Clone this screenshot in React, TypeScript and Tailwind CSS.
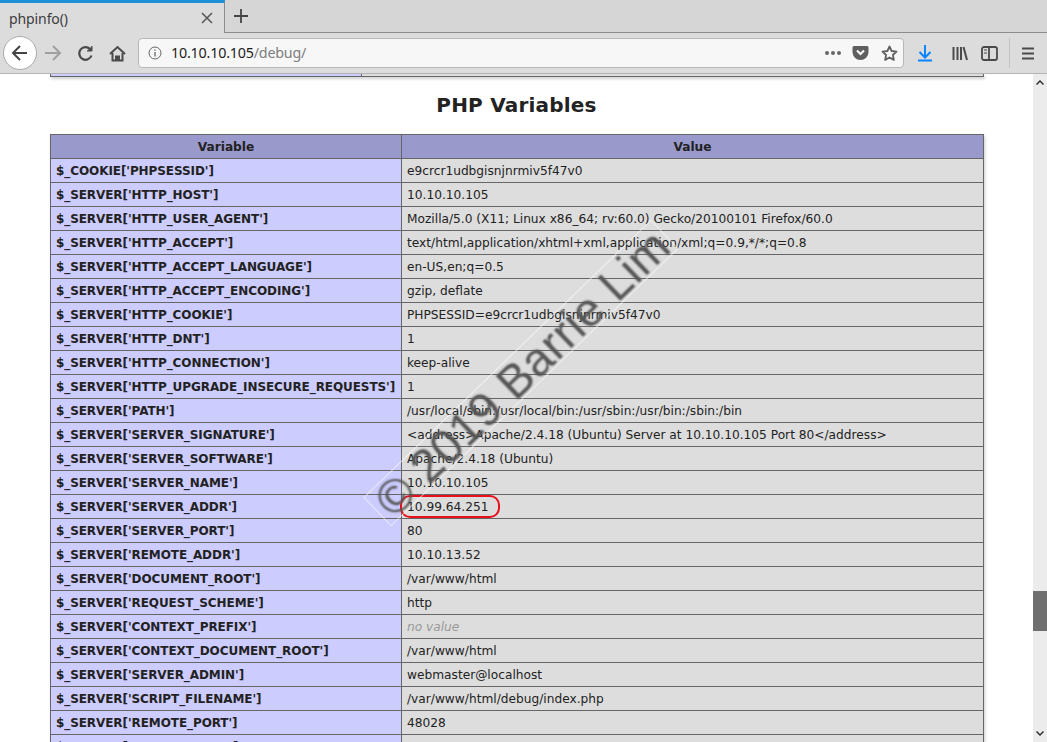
import React from "react";

const rows: [string, string, boolean?][] = [
  ["$_COOKIE['PHPSESSID']", "e9crcr1udbgisnjnrmiv5f47v0"],
  ["$_SERVER['HTTP_HOST']", "10.10.10.105"],
  ["$_SERVER['HTTP_USER_AGENT']", "Mozilla/5.0 (X11; Linux x86_64; rv:60.0) Gecko/20100101 Firefox/60.0"],
  ["$_SERVER['HTTP_ACCEPT']", "text/html,application/xhtml+xml,application/xml;q=0.9,*/*;q=0.8"],
  ["$_SERVER['HTTP_ACCEPT_LANGUAGE']", "en-US,en;q=0.5"],
  ["$_SERVER['HTTP_ACCEPT_ENCODING']", "gzip, deflate"],
  ["$_SERVER['HTTP_COOKIE']", "PHPSESSID=e9crcr1udbgisnjnrmiv5f47v0"],
  ["$_SERVER['HTTP_DNT']", "1"],
  ["$_SERVER['HTTP_CONNECTION']", "keep-alive"],
  ["$_SERVER['HTTP_UPGRADE_INSECURE_REQUESTS']", "1"],
  ["$_SERVER['PATH']", "/usr/local/sbin:/usr/local/bin:/usr/sbin:/usr/bin:/sbin:/bin"],
  ["$_SERVER['SERVER_SIGNATURE']", "<address>Apache/2.4.18 (Ubuntu) Server at 10.10.10.105 Port 80</address>"],
  ["$_SERVER['SERVER_SOFTWARE']", "Apache/2.4.18 (Ubuntu)"],
  ["$_SERVER['SERVER_NAME']", "10.10.10.105"],
  ["$_SERVER['SERVER_ADDR']", "10.99.64.251"],
  ["$_SERVER['SERVER_PORT']", "80"],
  ["$_SERVER['REMOTE_ADDR']", "10.10.13.52"],
  ["$_SERVER['DOCUMENT_ROOT']", "/var/www/html"],
  ["$_SERVER['REQUEST_SCHEME']", "http"],
  ["$_SERVER['CONTEXT_PREFIX']", "no value", true],
  ["$_SERVER['CONTEXT_DOCUMENT_ROOT']", "/var/www/html"],
  ["$_SERVER['SERVER_ADMIN']", "webmaster@localhost"],
  ["$_SERVER['SCRIPT_FILENAME']", "/var/www/html/debug/index.php"],
  ["$_SERVER['REMOTE_PORT']", "48028"],
  ["$_SERVER['REDIRECT_URL']", ""],
];

function Row({ k, v, muted }: { k: string; v: string; muted?: boolean }) {
  return (
    <div className="flex h-[24px] shrink-0 border-b border-[#666]">
      <div className="w-[351px] shrink-0 bg-[#ccf] border-r border-[#666] pl-[5px] font-bold text-[12px] tracking-[-0.08px] text-[#222] leading-[25px] whitespace-nowrap">{k}</div>
      <div className={`flex-1 bg-[#ddd] pl-[5px] text-[12.2px] leading-[25px] whitespace-nowrap ${muted ? "italic text-[#999]" : "text-[#222]"}`}>{v}</div>
    </div>
  );
}

export default function App() {
  return (
    <div className="relative w-[1047px] h-[742px] overflow-hidden bg-white flex flex-col font-['DejaVu_Sans',sans-serif]">
      {/* Tab strip */}
      <div className="h-[33px] shrink-0 bg-[#d6d6d6] flex">
        <div className="w-[225px] bg-[#dcdcdc] border-t-[3px] border-[#1e90d8] border-r border-r-[#8c8c8c] flex items-center pl-[9px] pr-[10px] justify-between text-[#3c3c3c]">
          <span className="font-['Noto_Sans',sans-serif] text-[14px] tracking-[-0.1px]">phpinfo()</span>
          <svg width="14" height="14" viewBox="0 0 14 14" stroke="#555" strokeWidth="1.5" fill="none"><path d="M2 2l10 10M12 2L2 12" /></svg>
        </div>
        <div className="flex-1 border-b border-[#8c8c8c] pl-[8px] pt-[8px]">
          <svg width="16" height="16" viewBox="0 0 16 16" stroke="#444" strokeWidth="1.8" fill="none"><path d="M8 1v14M1 8h14" /></svg>
        </div>
      </div>
      {/* Toolbar */}
      <div className="h-[41px] shrink-0 bg-[#dcdcdc] border-b border-[#b4b4b4] flex items-center relative z-10">
        <div className="ml-[3px] w-[34px] h-[34px] rounded-full bg-white border border-[#aaa] flex items-center justify-center">
          <svg width="18" height="18" viewBox="0 0 18 18" fill="none" stroke="#444" strokeWidth="2"><path d="M16 9H2M9 2L2 9l7 7" /></svg>
        </div>
        <svg className="ml-[7px]" width="18" height="18" viewBox="0 0 18 18" fill="none" stroke="#a0a0a0" strokeWidth="2"><path d="M1 9h15M9 2l7 7-7 7" /></svg>
        <svg className="ml-[15px]" width="17" height="17" viewBox="0 0 17 17" fill="none" stroke="#4a4a4a" strokeWidth="2.2"><path d="M14.5 10.5A6.3 6.3 0 1 1 13 4" /><path d="M15 1v5h-5" fill="#4a4a4a" strokeWidth="1" /></svg>
        <svg className="ml-[15px]" width="17" height="17" viewBox="0 0 17 17" fill="none" stroke="#4a4a4a" strokeWidth="2"><path d="M1 9l7.5-7L16 9" /><path d="M3.5 8v7.5h10V8" /><path d="M7 15.5v-4h3v4" fill="#4a4a4a" /></svg>
        <div className="ml-[12px] w-[766px] h-[30px] rounded-[4px] bg-[#f7f7f7] border border-[#b8b8b8] flex items-center pl-[9px] pr-[5px]">
          <svg width="14" height="14" viewBox="0 0 14 14" fill="none" stroke="#666" strokeWidth="1"><circle cx="7" cy="7" r="6" /><path d="M7 6v4.5M7 3.5v1.2" strokeWidth="1.3" /></svg>
          <span className="ml-[9px] text-[14.3px] text-[#1c1c1c] font-['Noto_Sans',sans-serif] tracking-[-0.2px]">10.10.10.105<span className="text-[#7d7d7d]">/debug/</span></span>
          <div className="ml-auto flex items-center">
            <span className="flex gap-[2px]">
              <span className="w-[4px] h-[4px] rounded-full bg-[#666]" /><span className="w-[4px] h-[4px] rounded-full bg-[#666]" /><span className="w-[4px] h-[4px] rounded-full bg-[#666]" />
            </span>
            <svg className="ml-[11px]" width="17" height="16" viewBox="0 0 17 16"><path d="M2 1h13a1.5 1.5 0 0 1 1.5 1.5V7a8 8 0 0 1-16 0V2.500A1.500 1.500 0 0 1 2 1z" fill="#5f5f5f" /><path d="M5 5.500l3.500 3.500L12 5.500" stroke="#f7f7f7" strokeWidth="2.200" fill="none" /></svg>
            <svg className="ml-[12px]" width="17" height="17" viewBox="0 0 17 17" fill="none" stroke="#5f5f5f" strokeWidth="1.800" strokeLinejoin="round"><path d="M8.500 1.500l2.100 4.500 4.900.600-3.600 3.400.950 4.900-4.350-2.400-4.350 2.400.950-4.900L1.500 6.600l4.900-.600z" /></svg>
          </div>
        </div>
        <svg className="ml-[13px]" width="16" height="18" viewBox="0 0 16 18" fill="none" stroke="#0a84ff" strokeWidth="2"><path d="M8 1v12M2.500 8L8 13.500 13.500 8M1 16.500h14" /></svg>
        <svg className="ml-[19px]" width="16" height="15" viewBox="0 0 16 15" fill="none" stroke="#4a4a4a" strokeWidth="2"><path d="M1.500 1v13M5.500 1v13M9 1v13M11.500 1l3.500 13" /></svg>
        <svg className="ml-[13px]" width="17" height="15" viewBox="0 0 17 15" fill="none" stroke="#4a4a4a" strokeWidth="1.800"><rect x="1" y="1" width="15" height="13" rx="2" /><path d="M8 1v13" /><path d="M3 4h3M3 7h3" strokeWidth="1" /></svg>
        <div className="ml-[11px] w-px h-[30px] bg-[#c4c4c4]" />
        <svg className="ml-[11px]" width="14" height="13" viewBox="0 0 14 13" fill="none" stroke="#4a4a4a" strokeWidth="1.800"><path d="M1 1.500h12M1 6.500h12M1 11.500h12" /></svg>
      </div>
      {/* Page */}
      <div className="flex-1 flex min-h-0">
        <div className="flex-1 min-w-0 overflow-hidden">
          <div className="w-[934px] ml-[50px] h-[3px] border-x border-b border-[#666] flex shadow-[1px_2px_3px_#ccc]">
            <div className="w-[311px] shrink-0 bg-[#ccf] border-r border-[#666]" />
            <div className="flex-1 bg-[#ddd]" />
          </div>
          <h2 className="h-[57px] pb-[2px] flex items-center justify-center text-[20px] tracking-[0.2px] font-bold text-[#222] ml-[33px] w-[967px]">PHP Variables</h2>
          <div className="w-[934px] ml-[50px] border-x border-t border-[#666] flex flex-col shadow-[1px_2px_3px_#ccc]">
            <div className="flex h-[24px] shrink-0 border-b border-[#666] bg-[#99c] font-bold text-[12.2px] text-[#222] text-center leading-[25px]">
              <div className="w-[351px] shrink-0 border-r border-[#666]">Variable</div>
              <div className="flex-1">Value</div>
            </div>
            {rows.map(([k, v, m]) => <Row key={k} k={k} v={v} muted={m} />)}
          </div>
        </div>
        {/* Scrollbar */}
        <div className="w-[14px] shrink-0 bg-[#ececec] flex flex-col items-center pt-[6px] pb-[6px]">
          <svg width="8" height="5" viewBox="0 0 8 5" fill="none" stroke="#333" strokeWidth="1.500"><path d="M.5 4.500L4 1l3.500 3.500" /></svg>
          <div className="w-full h-[40px] bg-[#6f6f6f] mt-[506px]" />
          <svg className="mt-auto" width="8" height="5" viewBox="0 0 8 5" fill="none" stroke="#333" strokeWidth="1.500"><path d="M.5.5L4 4l3.500-3.500" /></svg>
        </div>
      </div>
      {/* Red annotation over the SERVER_ADDR value */}
      <div className="absolute left-[400px] top-[495px] w-[100px] h-[23px] rounded-[10px] border-2 border-[#e8101a]" />
      {/* Watermark */}
      <div className="absolute left-[321px] top-[353px] w-[400px] h-[40px] rotate-[-44deg] border border-white/60 flex items-center justify-center">
        <span className="text-transparent text-[47px] tracking-[0.5px] whitespace-nowrap font-['Liberation_Sans',sans-serif] [text-shadow:1px_1px_2px_#555]">© 2019 Barrie Lim</span>
      </div>
    </div>
  );
}
